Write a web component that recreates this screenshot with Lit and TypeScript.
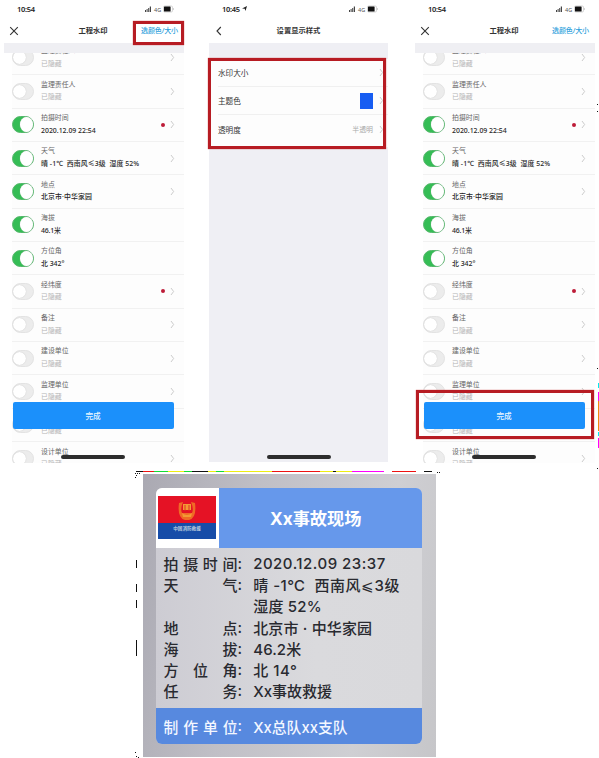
import { LitElement, html, css, svg, nothing } from "lit";
import { customElement, property } from "lit/decorators.js";
import { classMap } from "lit/directives/class-map.js";
import { styleMap } from "lit/directives/style-map.js";

interface Item { title: string; value?: string; on?: boolean; dot?: boolean; arrow?: boolean; ls?: number }

const ITEMS: Item[] = [
  { title: "监理责任人", arrow: true },
  { title: "监理责任人", arrow: true },
  { title: "拍摄时间", value: "2020.12.09 22:54", on: true, dot: true, arrow: true, ls: 0 },
  { title: "天气", value: "晴 -1℃  西南风≤3级  湿度 52%", on: true, arrow: true, ls: 0.08 },
  { title: "地点", value: "北京市·中华家园", on: true, arrow: true, ls: 0.1 },
  { title: "海拔", value: "46.1米", on: true, ls: -0.2 },
  { title: "方位角", value: "北 342°", on: true },
  { title: "经纬度", dot: true, arrow: true },
  { title: "备注", arrow: true },
  { title: "建设单位", arrow: true },
  { title: "监理单位", arrow: true },
  { title: "施工单位" },
  { title: "设计单位", arrow: true },
];

const chevron = svg`<path d="M1 1 L3.6 4.5 L1 8" fill="none" stroke="currentColor" stroke-width="1"/>`;

@customElement("status-bar")
class StatusBar extends LitElement {
  @property() time = "";
  @property({ type: Boolean }) located = false;
  static styles = css`
    :host { display: flex; height: 17px; align-items: center; justify-content: space-between; padding: 0 9px 0 13px; color: #222; font-size: 7.5px; }
    b { font-weight: 600; letter-spacing: -0.3px; }
    svg { display: block; }
    .left { display: flex; align-items: center; gap: 2px; }
  `;
  render() {
    return html`<div class="left"><b>${this.time}</b>${this.located
        ? html`<svg width="5" height="5"><path d="M0 2.5 L5 0 L3.5 5 L2.7 2.7Z" fill="#222"/></svg>` : nothing}</div>
      <svg width="30" height="8" viewBox="0 0 30 8">
        <path d="M0 7V5h1v2zM1.6 7V4h1v3zM3.2 7V3h1v4zM4.8 7V1.5h1.2V7z" fill="#444"/>
        <text x="9" y="6.5" font-size="5.5" fill="#555">4G</text>
        <rect x="18.5" y="1" width="9" height="6" rx="1.2" fill="#fff" stroke="#bbb" stroke-width=".6"/>
        <rect x="19" y="1.5" width="6.6" height="5" rx=".6" fill="#111"/>
        <path d="M28.4 3v2" stroke="#bbb" stroke-width=".7"/>
      </svg>`;
  }
}

@customElement("watermark-phone")
class WatermarkPhone extends LitElement {
  @property() mark = "";
  static styles = css`
    :host { display: flex; flex-direction: column; position: relative; width: 180px; height: 463px; background: #fff; }
    .nav { height: 26px; display: grid; grid-template-columns: 48px 1fr 46px; align-items: center; padding: 0 6px 0 5px; color: #333; }
    .nav b { text-align: center; font-size: 7.3px; color: #333; font-weight: 600; margin-right: 3px; }
    .nav .link { color: #2f9fdc; font-size: 7.1px; font-weight: 500; text-align: right; letter-spacing: -0.2px; white-space: nowrap; }
    .nav .cross { margin-top: 2px; }
    .band { height: 10px; background: #efeff3; }
    .list { height: 410px; overflow: hidden; display: flex; flex-direction: column; justify-content: flex-start; }
    .row { flex: none; height: 33.35px; box-sizing: border-box; border-bottom: 1px solid #f1f1f1; margin-left: 8px; display: flex; align-items: center; background: #fdfdfd; }
    .row:first-child { margin-top: -11.2px; }
    .switch { width: 22px; height: 17px; box-sizing: border-box; border-radius: 9px; background: #ececec; border: 1px solid #e3e3e3; display: flex; }
    .knob { width: 13px; height: 13px; margin: 1px 0; border-radius: 50%; background: #fff; box-shadow: 0 0 1px #bbb; }
    .on { background: #35bd55; border-color: #55b76b; justify-content: flex-end; }
    .on .knob { width: 13px; height: 15px; margin: 0; }
    .text { flex: 1; margin-left: 7px; font-size: 6.9px; line-height: 12.6px; color: #666; white-space: pre; }
    .sub { color: #b5b5b5; }
    .sub.val { color: #262626; font-weight: 500; }
    .dot { width: 4px; height: 4px; border-radius: 50%; background: #bd1c38; margin-right: 5.5px; }
    .arrow { width: 5px; height: 9px; color: #ccc; margin-right: 9px; display: block; }
    .done { position: absolute; left: 8.5px; top: 402px; width: 161px; height: 27px; border-radius: 2px; background: #1b90fb; color: #e9f6ff; font-size: 7.6px; font-weight: 500; display: flex; align-items: center; justify-content: center; }
    .home { position: absolute; left: 57px; top: 455px; width: 64px; height: 4px; border-radius: 2px; background: #2d2d2d; }
    .frame { position: absolute; box-sizing: border-box; border: 3px solid #b71c23; box-shadow: 0 0 1px #c44; }
    .frame.link-mark { left: 129px; top: 21px; width: 51px; height: 24px; }
    .frame.done-mark { left: 0.5px; top: 390px; width: 178px; height: 49px; }
  `;
  render() {
    return html`
      <status-bar time="10:54"></status-bar>
      <div class="nav"><svg class="cross" width="10" height="10"><path d="M1.2 1.2 L8.8 8.8 M8.8 1.2 L1.2 8.8" stroke="#333" stroke-width="1.1"/></svg>
        <b>工程水印</b><span class="link">选颜色/大小</span></div>
      <div class="band"></div>
      <div class="list">${ITEMS.map(i => html`
        <div class="row">
          <div class=${classMap({ switch: true, on: !!i.on })}><div class="knob"></div></div>
          <div class="text"><div>${i.title}</div><div class=${classMap({ sub: true, val: !!i.value })}
            style=${styleMap({ letterSpacing: `${i.ls ?? 0}px` })}>${i.value ?? "已隐藏"}</div></div>
          ${i.dot ? html`<div class="dot"></div>` : nothing}
          ${i.arrow ? html`<svg class="arrow">${chevron}</svg>` : nothing}
        </div>`)}</div>
      <div class="done">完成</div><div class="home"></div>
      ${this.mark ? html`<div class="frame ${this.mark}"></div>` : nothing}`;
  }
}

@customElement("style-phone")
class StylePhone extends LitElement {
  static styles = css`
    :host { display: flex; flex-direction: column; position: relative; width: 179px; height: 462px; background: #efeff4; }
    status-bar, .nav { background: #fff; }
    .nav { height: 26px; display: grid; grid-template-columns: 40px 1fr 40px; align-items: center; padding: 0 7px; }
    .nav b { text-align: center; font-size: 7.3px; font-weight: 600; color: #333; }
    .rows { margin: 16px 0 0; height: 88px; background: #fdfdfd; }
    .row { height: 28px; box-sizing: border-box; border-bottom: 1px solid #f0f0f0; margin-left: 9px; padding-right: 4px; display: flex; align-items: center; font-size: 7.6px; color: #333; }
    .row:last-child { border: 0; }
    .name { flex: 1; }
    .swatch { width: 13px; height: 16px; background: #175df2; margin-right: 6px; }
    .hint { color: #aaa; font-size: 6.9px; margin-right: 6px; }
    svg { width: 5px; height: 9px; color: #ccc; display: block; }
    .nav svg { width: 6px; height: 10px; color: #333; margin-top: 2px; }
    .frame { position: absolute; left: -1px; top: 58px; width: 178px; height: 91px; box-sizing: border-box; border: 3px solid #b71c23; box-shadow: 0 0 1px #c44; }
    .home { position: absolute; left: 57.5px; top: 455px; width: 64px; height: 4px; border-radius: 2px; background: #2d2d2d; }
  `;
  render() {
    return html`
      <status-bar time="10:45" located></status-bar>
      <div class="nav"><svg><path d="M4.8 1 L1 5 L4.8 9" fill="none" stroke="#333" stroke-width="1.1"/></svg><b>设置显示样式</b></div>
      <div class="rows">
        <div class="row"><span class="name">水印大小</span><svg>${chevron}</svg></div>
        <div class="row"><span class="name">主题色</span><div class="swatch"></div><svg>${chevron}</svg></div>
        <div class="row"><span class="name">透明度</span><span class="hint">半透明</span><svg>${chevron}</svg></div>
      </div>
      <div class="frame"></div><div class="home"></div>`;
  }
}

const FACTS: [string, string, number][] = [
  ["拍摄时间", "2020.12.09 23:37", 0.5],
  ["天气", "晴 -1℃  西南风⩽3级", 0.5],
  ["", "湿度 52%", 0.2],
  ["地点", "北京市 · 中华家园", 0.15],
  ["海拔", "46.2米", 0.1],
  ["方位角", "北 14°", 0.5],
  ["任务", "Xx事故救援", 0],
];

@customElement("site-card")
class SiteCard extends LitElement {
  static styles = css`
    :host { display: block; box-sizing: border-box; width: 293.5px; height: 283px; padding: 14px 14px 13px 13.5px; font-family: Inter, "Noto Sans CJK SC", sans-serif;
      background: linear-gradient(100deg, #aaa9b2 0%, #c0bfc6 35%, #cfcfd3 75%, #c6c6c9 100%); }
    .card { height: 256px; border-radius: 6px; overflow: hidden; display: flex; flex-direction: column; background: linear-gradient(90deg, #cdccd3, #dadadd 60%, #d9d9dc); }
    .head { height: 60px; display: flex; flex: none; }
    .logo { width: 62.5px; background: #fff; box-sizing: border-box; padding: 8px 0 0 2px; }
    .logo svg { display: block; }
    .title { flex: 1; background: #6698eb; color: #fff; font-size: 17.2px; font-weight: 700; display: flex; align-items: center; padding-left: 51.5px; padding-bottom: 1px; }
    .body { flex: 1; padding-top: 5px; color: #292a30; font-size: 15px; font-weight: 500; }
    .line { height: 21.2px; display: flex; align-items: center; padding-left: 7.5px; white-space: pre; }
    .label { width: 74px; display: flex; justify-content: space-between; }
    .colon { width: 15.7px; }
    .foot { height: 36px; background: #5789df; color: #f3f7ff; font-size: 14.8px; font-weight: 500; display: flex; align-items: center; }
  `;
  line(label: string, value: string, spacing = 0) {
    return html`<div class="line"><div class="label">${[...label].map(c => html`<span>${c}</span>`)}</div><span class="colon">${label ? ":" : ""}</span><span style=${styleMap({ letterSpacing: `${spacing}px` })}>${value}</span></div>`;
  }
  render() {
    return html`<div class="card">
      <div class="head"><div class="logo"><svg width="58" height="43" viewBox="0 0 58 43">
        <rect width="58" height="28" fill="#e51225"/><rect y="27" width="58" height="16" fill="#164ca8"/>
        <path d="M21 7 Q19 22 27 24 H31 Q39 22 37 7 L33 6 Q36 13 34 17 H24 Q22 13 25 6Z" fill="#ef6a25"/>
        <path d="M25 8h8v6h-8zM24 17q5 4 10 0l-1 4h-8z" fill="#f39a35"/><path d="M27 9v6M31 9v6" stroke="#df3324"/>
        <text x="29" y="34" text-anchor="middle" font-size="4.6" font-weight="700" fill="#bdccdf">中国消防救援</text></svg></div>
        <div class="title">Xx事故现场</div></div>
      <div class="body">${FACTS.map(f => this.line(f[0], f[1], f[2]))}</div>
      <div class="foot">${this.line("制作单位", "Xx总队xx支队")}</div>
    </div>`;
  }
}

@customElement("app-root")
class AppRoot extends LitElement {
  static styles = css`
    :host { display: block; width: 599px; height: 758px; overflow: hidden; position: relative; background: #fff; font-family: "Noto Sans", "Noto Sans CJK SC", sans-serif; }
    .phones { display: flex; height: 474px; padding-left: 4px; }
    style-phone { margin-left: 25px; }
    .last { margin-left: 27px; }
    site-card { margin-left: 142.5px; }
    .edge { position: absolute; left: 0; top: 0; pointer-events: none; }
  `;
  render() {
    return html`
      <div class="phones"><watermark-phone mark="link-mark"></watermark-phone><style-phone></style-phone><watermark-phone class="last" mark="done-mark"></watermark-phone></div>
      <site-card></site-card>
      <svg class="edge" width="599" height="758" shape-rendering="crispEdges">
        <path d="M136 471.5h7M192 471.5h16M333 471.5h3M424 471.5h8M136.5 560v8M136.5 584v8M136.5 600v8M136.5 640v16" stroke="#111"/>
        <path d="M143 471.5h11M272 471.5h48M392 471.5h24" stroke="#e11"/>
        <path d="M154 471.5h14M184 471.5h8M216 471.5h8" stroke="#1d3"/>
        <path d="M168 471.5h16M208 471.5h8M224 471.5h48M320 471.5h13M336 471.5h16" stroke="#ee1"/>
        <path d="M352 471.5h32M598.5 392v9M598.5 438v10" stroke="#f0f"/>
        <path d="M598.5 383v5M598.5 432v4" stroke="#0ee"/><path d="M598.5 401v30" stroke="#e81"/>
        <path d="M135 473.5h1M137 473.5h1M139 473.5h1M136 475.5h1M135 477.5h1M437 472.5h1M439 472.5h1M135 752.5h1M136 756.5h1M138 757.5h1M597 104.5h1M597 111.5h1M597 368.5h1M597 468.5h1" stroke="#111"/>
      </svg>`;
  }
}
